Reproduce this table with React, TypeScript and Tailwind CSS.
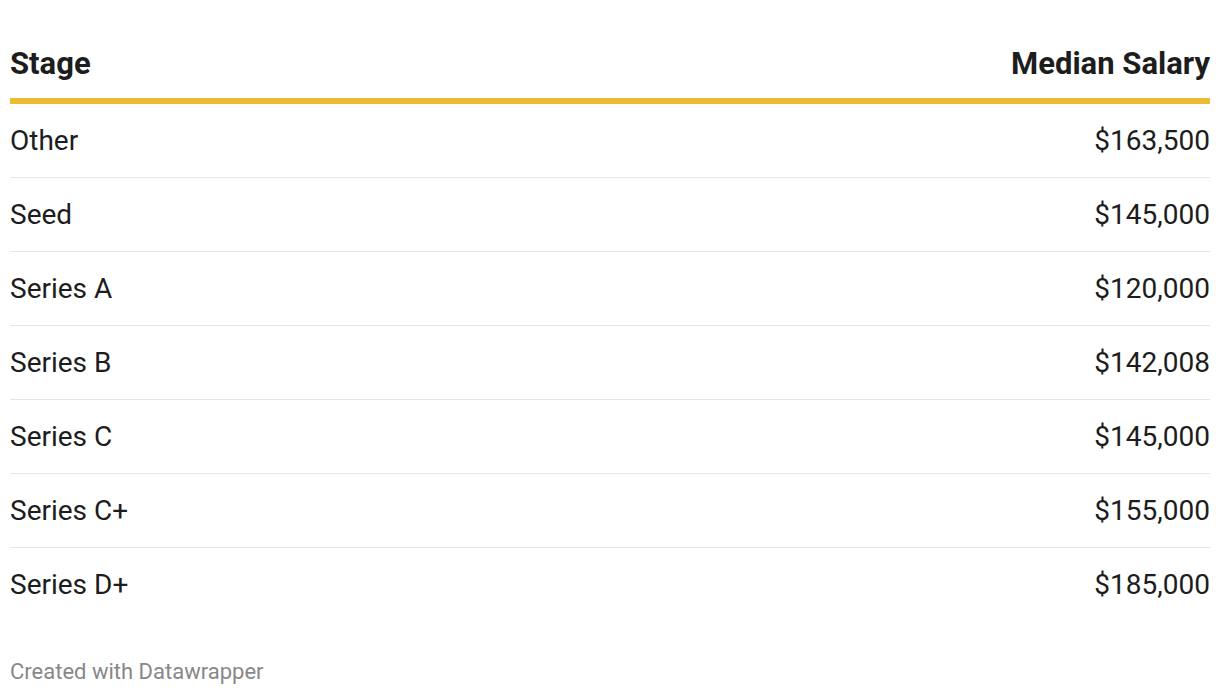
import React from "react";

type Row = {
  stage: string;
  salary: string;
};

const rows: Row[] = [
  { stage: "Other", salary: "$163,500" },
  { stage: "Seed", salary: "$145,000" },
  { stage: "Series A", salary: "$120,000" },
  { stage: "Series B", salary: "$142,008" },
  { stage: "Series C", salary: "$145,000" },
  { stage: "Series C+", salary: "$155,000" },
  { stage: "Series D+", salary: "$185,000" },
];

const App: React.FC = () => {
  return (
    <div className="w-[1220px] h-[696px] bg-white px-[10px] font-['Roboto',sans-serif] text-[#1d1d1d]">
      {/* Header */}
      <div className="flex items-end justify-between pt-[46px] pb-[16px] border-b-[6px] border-[#ecbb34] text-[31px] font-bold leading-[36px]">
        <span>Stage</span>
        <span>Median Salary</span>
      </div>

      {/* Rows */}
      {rows.map((row, i) => (
        <div
          key={row.stage}
          className={
            i < rows.length - 1
              ? "flex items-center justify-between h-[74px] border-b border-[#e6e6e6] text-[28px]"
              : "flex items-center justify-between h-[74px] text-[28px]"
          }
        >
          <span>{row.stage}</span>
          <span>{row.salary}</span>
        </div>
      ))}

      {/* Footer */}
      <div className="pt-[37px] text-[22px] leading-[26px] text-[#888888]">
        Created with Datawrapper
      </div>
    </div>
  );
};

export default App;
